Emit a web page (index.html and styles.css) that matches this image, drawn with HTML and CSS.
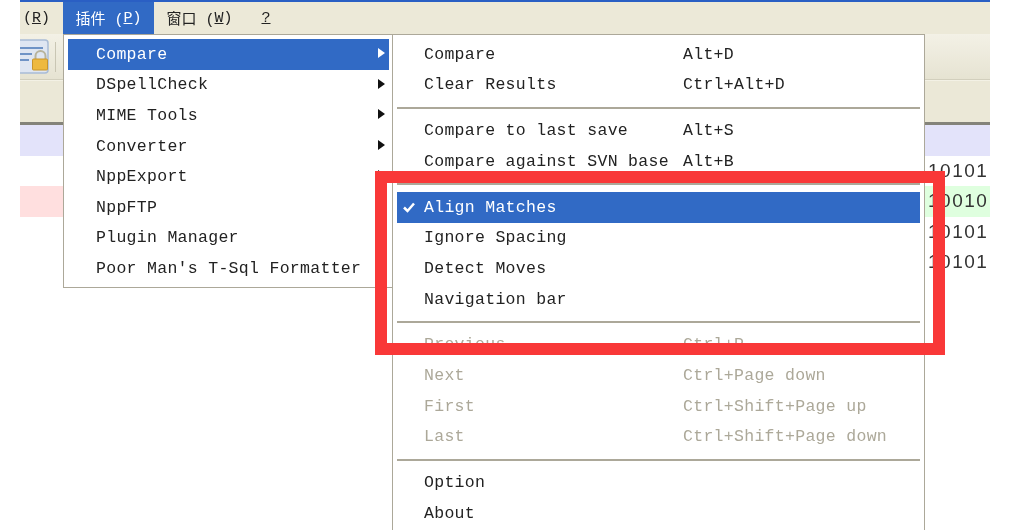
FILE: index.html
```html
<!DOCTYPE html>
<html lang="en">
<head>
    <meta charset="UTF-8">
    <title>Compare plugin menu</title>
    <link rel="stylesheet" href="styles.css">
</head>
<body>

    <div class="window">
        <div class="menubar">
            <div class="menubar-item first">(<u>R</u>)</div>
            <div class="menubar-item active">插件 (<u>P</u>)</div>
            <div class="menubar-item">窗口 (<u>W</u>)</div>
            <div class="menubar-item help"><u>?</u></div>
        </div>

        <div class="toolbar">
            <svg class="lock-icon" width="30" height="36" viewBox="0 0 30 36">
                <rect x="-6" y="1" width="34" height="33" rx="3" fill="#dfe6f2" stroke="#a9bcd6" stroke-width="1.5"/>
                <path d="M0 9H23M0 15H12M0 21H9" stroke="#6f93c6" stroke-width="2"/>
                <path d="M15.500 20v-3a5 5 0 0 1 10 0v3" fill="none" stroke="#b7b39c" stroke-width="2"/>
                <rect x="12.500" y="20" width="15" height="11" rx="1" fill="#eeb93f" stroke="#c8952c"/>
            </svg>
            <div class="toolbar-sep"></div>
        </div>
        <div class="tabbar"></div>

        <div class="diff">
            <div class="diff-row blue"></div>
            <div class="diff-row"><span>10101</span></div>
            <div class="diff-row pink"><span class="green">10010</span></div>
            <div class="diff-row"><span>10101</span></div>
            <div class="diff-row"><span>10101</span></div>
        </div>

        <div class="menu plugins">
            <div class="item selected">Compare<i class="arrow"></i></div>
            <div class="item">DSpellCheck<i class="arrow"></i></div>
            <div class="item">MIME Tools<i class="arrow"></i></div>
            <div class="item">Converter<i class="arrow"></i></div>
            <div class="item">NppExport<i class="arrow"></i></div>
            <div class="item">NppFTP</div>
            <div class="item">Plugin Manager</div>
            <div class="item">Poor Man's T-Sql Formatter</div>
        </div>

        <div class="menu compare">
            <div class="item"><span class="label">Compare</span><span>Alt+D</span></div>
            <div class="item"><span class="label">Clear Results</span><span>Ctrl+Alt+D</span></div>
            <div class="sep"></div>
            <div class="item"><span class="label">Compare to last save</span><span>Alt+S</span></div>
            <div class="item"><span class="label">Compare against SVN base</span><span>Alt+B</span></div>
            <div class="sep"></div>
            <div class="item selected">
                <svg class="check" width="12" height="11" viewBox="0 0 12 11"><path d="M1 5.500L4.500 9L11 1.500" fill="none" stroke="#fff" stroke-width="2.500"/></svg>
                <span class="label">Align Matches</span>
            </div>
            <div class="item"><span class="label">Ignore Spacing</span></div>
            <div class="item"><span class="label">Detect Moves</span></div>
            <div class="item"><span class="label">Navigation bar</span></div>
            <div class="sep"></div>
            <div class="item disabled"><span class="label">Previous</span><span>Ctrl+P</span></div>
            <div class="item disabled"><span class="label">Next</span><span>Ctrl+Page down</span></div>
            <div class="item disabled"><span class="label">First</span><span>Ctrl+Shift+Page up</span></div>
            <div class="item disabled"><span class="label">Last</span><span>Ctrl+Shift+Page down</span></div>
            <div class="sep"></div>
            <div class="item"><span class="label">Option</span></div>
            <div class="item"><span class="label">About</span></div>
        </div>

        <div class="highlight"></div>
    </div>

</body>
</html>
```

FILE: styles.css
```css
body {
    margin: 0;
    background-color: white;
    overflow: hidden;
}
.window {
    position: relative;
    width: 970px;
    height: 530px;
    margin-left: 20px;
    overflow: hidden;
    background-color: white;
    font-family: "Liberation Mono", "Noto Sans CJK SC", monospace;
    filter: blur(0.35px);
}
.menubar {
    display: flex;
    height: 32px;
    border-top: 2px solid #2a5fc4;
    background-color: #ece9d8;
    font-family: "Liberation Mono", "Noto Sans CJK SC", monospace;
    font-size: 15px;
    color: #222;
}
.menubar-item {
    display: flex;
    align-items: center;
    justify-content: center;
    white-space: pre;
    width: 91px;
}
.menubar-item.first {
    width: 43px;
    justify-content: flex-end;
    padding-right: 13px;
    box-sizing: border-box;
}
.menubar-item.active {
    background-color: #316ac5;
    color: white;
}
.menubar-item.help {
    width: 30px;
    margin-left: 6px;
}
.toolbar {
    display: flex;
    align-items: center;
    height: 46px;
    background: linear-gradient(#f3f1e6, #e6e3d2);
    border-bottom: 1px solid #d2cfbd;
    box-sizing: border-box;
}
.toolbar-sep {
    width: 1px;
    height: 30px;
    margin-left: 5px;
    background-color: #c9c6b4;
}
.tabbar {
    height: 45px;
    background-color: #ebe8d7;
    border-top: 1px solid #f3f1e5;
    border-bottom: 3px solid #84837a;
    box-sizing: border-box;
}
.diff-row {
    height: 30.6px;
    padding-left: 908px;
    font-family: "Liberation Sans", sans-serif;
    font-size: 19px;
    line-height: 30px;
    letter-spacing: 1.5px;
    color: #333;
    white-space: nowrap;
}
.diff-row.blue {
    background-color: #e3e3fa;
}
.diff-row.pink {
    background: linear-gradient(to right, #ffdfdf 43px, #dfffdf 43px);
}
.menu {
    position: absolute;
    top: 34px;
    background-color: white;
    border: 1px solid #aca899;
    box-sizing: border-box;
    padding: 4px;
    font-size: 16.500px;
    letter-spacing: 0.300px;
    color: #222;
}
.menu.plugins {
    left: 43px;
    width: 331px;
    height: 254px;
}
.menu.compare {
    left: 372px;
    width: 533px;
    height: 520px;
}
.item {
    position: relative;
    display: flex;
    align-items: center;
    height: 30.6px;
    white-space: pre;
}
.plugins .item {
    padding-left: 28px;
}
.compare .item {
    padding-left: 27px;
}
.label {
    width: 259px;
}
.item.selected {
    background-color: #316ac5;
    color: white;
}
.item.disabled {
    color: #aca899;
}
.sep {
    height: 15.300px;
    background: linear-gradient(#aca899, #aca899) center / 100% 2px no-repeat;
}
.arrow {
    position: absolute;
    right: 4px;
    top: 9px;
    border-left: 7px solid #111;
    border-top: 5.500px solid transparent;
    border-bottom: 5.500px solid transparent;
}
.selected .arrow {
    border-left-color: white;
}
.check {
    position: absolute;
    left: 6px;
    top: 10px;
}
.highlight {
    position: absolute;
    left: 355px;
    top: 171px;
    width: 570px;
    height: 184px;
    border: 12px solid #f93838;
    box-sizing: border-box;
}
```
